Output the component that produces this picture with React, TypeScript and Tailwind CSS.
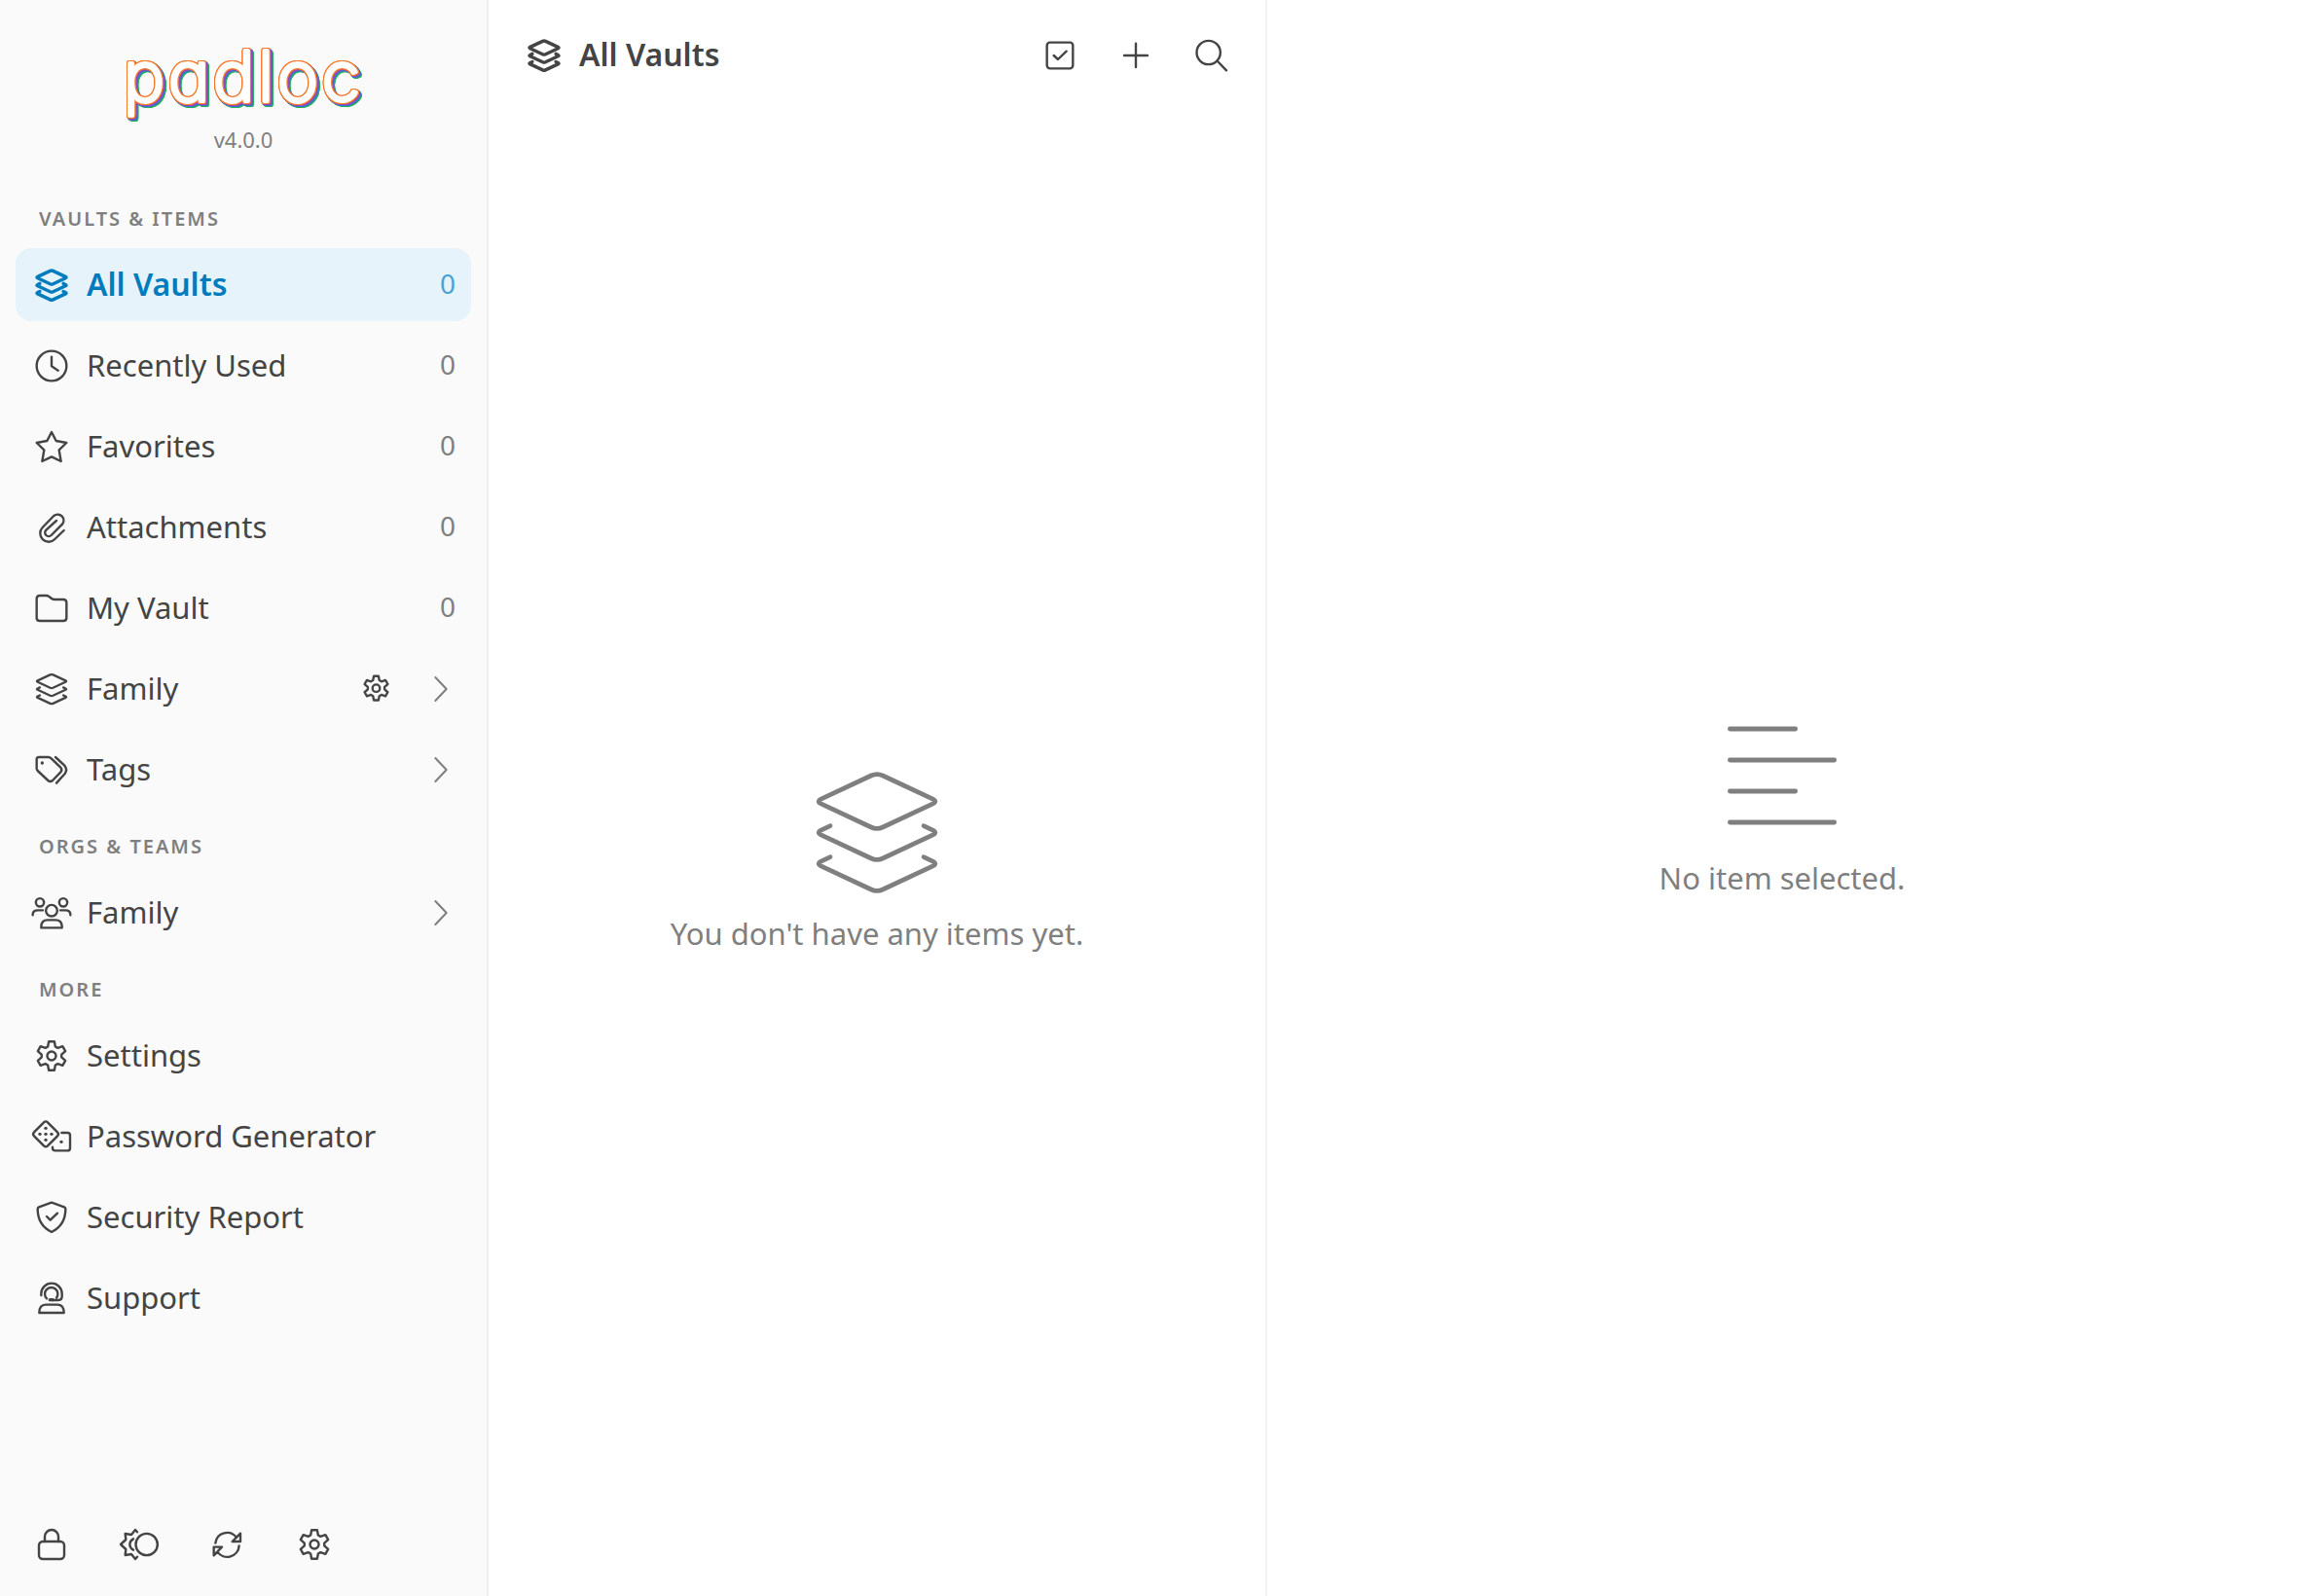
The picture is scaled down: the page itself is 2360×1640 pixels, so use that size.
import type { ReactNode } from "react";

type IconProps = { children: ReactNode; className?: string; weight?: number };

/* All line icons share one canvas: origin in the middle, three units to a pixel. */
function Icon({ children, className = "w-11", weight = 7.2 }: IconProps) {
  return (
    <svg
      viewBox="-66 -54 132 108"
      className={`shrink-0 overflow-visible ${className}`}
      fill="none"
      stroke="currentColor"
      strokeWidth={weight}
      strokeLinecap="round"
      strokeLinejoin="round"
      aria-hidden="true"
    >
      {children}
    </svg>
  );
}

const LAYERS = [
  "M56 4Q62 1.2 68 4L119 27.8Q124.7 30.5 119 33.2L68 57Q62 59.8 56 57L5 33.2Q-.7 30.5 5 27.8Z",
  "M14 55.6L5 59.8Q-.7 62.5 5 65.2L56 89Q62 91.8 68 89L119 65.2Q124.7 62.5 119 59.8L110 55.6",
  "M14 87.6L5 91.8Q-.7 94.5 5 97.2L56 121Q62 123.8 68 121L119 97.2Q124.7 94.5 119 91.8L110 87.6",
];

function LayersIcon({ bold = false }: { bold?: boolean }) {
  return (
    <Icon weight={bold ? 13.5 : 9.2}>
      <g transform="scale(.755) translate(-62 -62)">
        {LAYERS.map((d) => (
          <path key={d} d={d} />
        ))}
      </g>
    </Icon>
  );
}

const GEAR = Array.from({ length: 6 }, (_, k) =>
  [
    [-22, 31],
    [-11, 45],
    [11, 45],
    [22, 31],
  ].map(([a, r]) => {
    const t = ((k * 60 + a) * Math.PI) / 180;
    return `${(r * Math.sin(t)).toFixed(1)},${(-r * Math.cos(t)).toFixed(1)}`;
  }),
)
  .flat()
  .join(" ");

function GearIcon({ className, weight }: { className?: string; weight?: number }) {
  return (
    <Icon className={className} weight={weight}>
      <polygon points={GEAR} />
      <circle r="13.5" />
    </Icon>
  );
}

const ClockIcon = () => (
  <Icon>
    <circle r="46" />
    <path d="M0-28V1L20 14" />
  </Icon>
);

const StarIcon = () => (
  <Icon>
    <path d="M0-45L14-18L46-12L23 10L29 45L0 31L-29 45L-23 10L-46-12L-14-18Z" />
  </Icon>
);

const ClipIcon = () => (
  <Icon>
    <path d="M38 9L10 36A26 26 0 0 1-28 0L7-36A18.5 18.5 0 0 1 33-10L-1 24A11.3 11.3 0 0 1-17 8L15-21" />
  </Icon>
);

const FolderIcon = () => (
  <Icon>
    <path d="M-46-29Q-46-39-36-39H-16Q-11-39-8-36L0-30Q4-27 9-27H36Q46-27 46-17V30Q46 39 36 39H-36Q-46 39-46 30Z" />
  </Icon>
);

const TagsIcon = () => (
  <Icon>
    <path d="M-46-32Q-46-39-39-39H-10Q-5-39-1-35L28-7Q34 0 28 7L3 33Q-4 39-11 33L-43 3Q-46 0-46-5Z" />
    <path d="M12-39L40-13Q50-1 41 12L15 41" />
    <circle cx="-29" cy="-21" r="5" fill="currentColor" stroke="none" />
  </Icon>
);

const TeamIcon = () => (
  <Icon>
    <circle cy="-7" r="17.5" />
    <circle cx="-36" cy="-32" r="12.5" />
    <circle cx="36" cy="-32" r="12.5" />
    <path d="M-32 46V43Q-32 22-12 22H12Q32 22 32 43V46Z" />
    <path d="M-58 7V4Q-57-8-43-8H-27M58 7V4Q57-8 43-8H27" />
  </Icon>
);

const DiceIcon = () => (
  <Icon>
    <path d="M-24-44Q-18-50-12-44L18-14Q24-8 18-2L-12 28Q-18 34-24 28L-54-2Q-60-8-54-14Z" />
    <path d="M31-12H49Q57-12 57-4V35Q57 43 49 43H11Q3 43 3 35V32" />
    <g fill="currentColor" stroke="none">
      <circle cx="-18" cy="-26" r="5" />
      <circle cx="-36" cy="-8" r="5" />
      <circle cx="-18" cy="-8" r="5" />
      <circle cx="0" cy="-8" r="5" />
      <circle cx="-18" cy="10" r="5" />
      <circle cx="30" cy="16" r="5" />
    </g>
  </Icon>
);

const ShieldIcon = () => (
  <Icon>
    <path d="M0-46L39-32Q43-30 43-26Q43 24 0 45Q-43 24-43-26Q-43-30-39-32Z" />
    <path d="M-15-3L-4 8L18-13" />
  </Icon>
);

const SupportIcon = () => (
  <Icon>
    <path d="M-32-9V-14A32 32 0 0 1 32-14V-6Q32 6 21 6H2" />
    <path d="M-15 1A20 20 0 1 1 15-1" />
    <path d="M-5 5H4" strokeWidth="10" />
    <path d="M-38 45Q-38 20-18 20H18Q38 20 38 45Z" />
  </Icon>
);

const LockIcon = () => (
  <Icon>
    <rect x="-39" y="-9" width="78" height="54" rx="12" />
    <path d="M-21-9V-24A21 21 0 0 1 21-24V-9" />
  </Icon>
);

const ThemeIcon = () => (
  <Icon>
    <circle cx="23" r="33.5" />
    <path d="M-6-38L-12-45L-24-30L-43-33L-41-15L-57 0L-41 15L-43 33L-24 30L-12 45L-6 38" />
    <path d="M-18-17Q-29-11-29 0Q-29 11-18 17" />
  </Icon>
);

const SyncIcon = () => (
  <Icon>
    <path d="M-35-4A36 36 0 0 1 30-21M42-34V-9H17Z" />
    <path d="M38 4A37 37 0 0 1-29 23M-40 34V8H-15Z" />
  </Icon>
);

const SelectIcon = () => (
  <Icon>
    <rect x="-40" y="-40" width="80" height="80" rx="9" />
    <path d="M-19 0L-6 12L20-13" />
  </Icon>
);

const PlusIcon = () => (
  <Icon>
    <path d="M-36 0H36M0-37V36" />
  </Icon>
);

const SearchIcon = () => (
  <Icon>
    <circle cx="-10" cy="-9" r="36.5" />
    <path d="M18 18L45 46" />
  </Icon>
);

const ChevronIcon = () => (
  <Icon className="w-11 text-[#7f7f7f]" weight={6}>
    <path d="M-17-36L17 0L-17 36" />
  </Icon>
);

function Wordmark() {
  return (
    <svg
      viewBox="0 0 280 95"
      className="h-[95px] w-[280px] overflow-visible [filter:drop-shadow(1px_0_0_#f47a2c)_drop-shadow(-1px_0_0_#f47a2c)_drop-shadow(0_1px_0_#f47a2c)_drop-shadow(0_-1px_0_#f47a2c)_drop-shadow(1px_1px_0_#9b45b8)_drop-shadow(1px_1px_0_#3b74cf)_drop-shadow(1px_1px_0_#1fb25a)]"
    >
      <text
        x="140"
        y="72"
        textAnchor="middle"
        className="fill-white stroke-white font-['Inter',sans-serif] text-[72px] font-extralight tracking-wider [font-feature-settings:'cv11']"
        strokeWidth="4"
        strokeLinejoin="round"
      >
        padloc
      </text>
    </svg>
  );
}

type RowProps = {
  icon: ReactNode;
  label: string;
  count?: number;
  active?: boolean;
  expandable?: boolean;
  settings?: boolean;
};

function Row({ icon, label, count, active, expandable, settings }: RowProps) {
  return (
    <li
      className={`flex h-[75px] items-center rounded-2xl pr-4 ${
        active ? "bg-[#e6f3fa] text-[#007bbd]" : ""
      }`}
    >
      <button type="button" className="flex h-full min-w-0 flex-1 items-center gap-3.5 pl-[15px] text-left">
        {icon}
        <span className={`flex-1 pb-0.5 leading-11 whitespace-nowrap ${active ? "text-[32px] font-semibold" : ""}`}>
          {label}
        </span>
        {count !== undefined && (
          <span className={`pb-1 text-[28px] ${active ? "text-[#4ca2d3]" : "text-[#7f7f7f]"}`}>{count}</span>
        )}
      </button>
      {settings && (
        <button type="button" aria-label={`${label} settings`} className="mr-[26px]">
          <GearIcon className="w-[37px]" weight={8.4} />
        </button>
      )}
      {expandable && (
        <button type="button" aria-label={`Expand ${label}`} className="-mr-[7px]">
          <ChevronIcon />
        </button>
      )}
    </li>
  );
}

function Section({ title, children }: { title: string; children: ReactNode }) {
  return (
    <section className="px-4">
      <h2 className="flex h-[72px] items-end pb-4 pl-6 text-xl leading-7 font-semibold tracking-[2px] text-[#7f7f7f] uppercase">
        {title}
      </h2>
      <ul className="flex flex-col gap-2">{children}</ul>
    </section>
  );
}

function ToolButton({ label, children }: { label: string; children: ReactNode }) {
  return (
    <button type="button" aria-label={label} className="flex h-[74px] w-[74px] items-center justify-center">
      {children}
    </button>
  );
}

export default function App() {
  return (
    <div className="grid h-screen grid-cols-[502px_800fr_1058fr] bg-white font-['Noto_Sans',sans-serif] text-[31px] text-[#444444]">
      <aside className="flex min-h-0 flex-col border-r-2 border-[#eeeeee] bg-[#fafafa]">
        <header className="flex flex-col items-center pt-8 pb-6">
          <Wordmark />
          <p className="text-[22px] leading-8 text-[#7f7f7f]">v4.0.0</p>
        </header>
        <nav className="min-h-0 flex-1 overflow-hidden">
          <Section title="Vaults & Items">
            <Row icon={<LayersIcon bold />} label="All Vaults" count={0} active />
            <Row icon={<ClockIcon />} label="Recently Used" count={0} />
            <Row icon={<StarIcon />} label="Favorites" count={0} />
            <Row icon={<ClipIcon />} label="Attachments" count={0} />
            <Row icon={<FolderIcon />} label="My Vault" count={0} />
            <Row icon={<LayersIcon />} label="Family" settings expandable />
            <Row icon={<TagsIcon />} label="Tags" expandable />
          </Section>
          <Section title="Orgs & Teams">
            <Row icon={<TeamIcon />} label="Family" expandable />
          </Section>
          <Section title="More">
            <Row icon={<GearIcon />} label="Settings" />
            <Row icon={<DiceIcon />} label="Password Generator" />
            <Row icon={<ShieldIcon />} label="Security Report" />
            <Row icon={<SupportIcon />} label="Support" />
          </Section>
        </nav>
        <footer className="flex gap-4 p-4">
          <ToolButton label="Lock">
            <LockIcon />
          </ToolButton>
          <ToolButton label="Toggle theme">
            <ThemeIcon />
          </ToolButton>
          <ToolButton label="Sync">
            <SyncIcon />
          </ToolButton>
          <ToolButton label="Settings">
            <GearIcon />
          </ToolButton>
        </footer>
      </aside>

      <main className="flex min-w-0 flex-col border-r-2 border-[#f2f2f2]">
        <header className="flex items-center gap-1 py-5 pr-[18px] pl-[35px]">
          <h1 className="flex flex-1 items-center gap-3.5 text-[32px] leading-11 font-semibold">
            <LayersIcon bold />
            <span className="pb-0.5">All Vaults</span>
          </h1>
          <ToolButton label="Select items">
            <SelectIcon />
          </ToolButton>
          <ToolButton label="Add item">
            <PlusIcon />
          </ToolButton>
          <ToolButton label="Search">
            <SearchIcon />
          </ToolButton>
        </header>
        <div className="flex flex-1 flex-col items-center justify-center gap-5 pt-5 text-[#7f7f7f]">
          <svg
            viewBox="0 0 124 124"
            className="w-31 overflow-visible"
            fill="none"
            stroke="currentColor"
            strokeWidth="4.7"
            strokeLinecap="round"
            aria-hidden="true"
          >
            {LAYERS.map((d) => (
              <path key={d} d={d} />
            ))}
          </svg>
          <p className="leading-11">You don't have any items yet.</p>
        </div>
      </main>

      <section className="flex min-w-0 flex-col items-center justify-center gap-8 pt-[30px] text-[#7f7f7f]">
        <svg
          viewBox="0 0 112 102"
          className="w-28"
          fill="none"
          stroke="currentColor"
          strokeWidth="4.8"
          strokeLinecap="round"
          aria-hidden="true"
        >
          <path d="M2.4 3H69.6M2.4 35H109.6M2.4 67H69.6M2.4 99H109.6" />
        </svg>
        <p className="leading-11">No item selected.</p>
      </section>
    </div>
  );
}
